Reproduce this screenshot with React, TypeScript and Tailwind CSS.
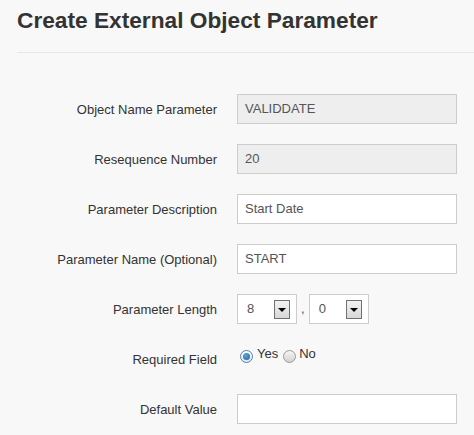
import React from 'react';

const FIELDS_TOP = [
  { label: 'Object Name Parameter', value: 'VALIDDATE', readOnly: true },
  { label: 'Resequence Number', value: '20', readOnly: true },
  { label: 'Parameter Description', value: 'Start Date', readOnly: false },
  { label: 'Parameter Name (Optional)', value: 'START', readOnly: false },
];

function TextBox({ value, readOnly }: { value: string; readOnly?: boolean }) {
  return (
    <div
      className={`ml-[20px] flex h-[30px] w-[220px] items-center border border-[#cccccc] pl-[7px] text-[13px] text-[#555555] ${
        readOnly ? 'bg-[#eeeeee]' : 'bg-white'
      }`}
    >
      {value}
    </div>
  );
}

function Label({ children }: { children: React.ReactNode }) {
  return <div className="w-[200px] text-right text-[13px] leading-[15px] text-[#333333]">{children}</div>;
}

function SelectBox({ value }: { value: string }) {
  return (
    <div className="flex h-[30px] w-[60px] items-center border border-[#cccccc] bg-white pl-[9px] text-[13px] text-[#555555]">
      <span className="flex-1">{value}</span>
      {/* dropdown arrow button */}
      <span className="mr-[6px] flex h-[19px] w-[16px] items-center justify-center border border-[#707070] bg-[linear-gradient(#f2f2f2,#d8d8d8)]">
        <span className="mt-[1px] h-0 w-0 border-t-[4px] border-r-[4px] border-l-[4px] border-t-black border-r-transparent border-l-transparent" />
      </span>
    </div>
  );
}

function Radio({ checked }: { checked?: boolean }) {
  return (
    <span
      className={`flex h-[13px] w-[13px] items-center justify-center rounded-full border ${
        checked
          ? 'border-[#5a7fa0] bg-[linear-gradient(#ffffff,#dfe6ee)]'
          : 'border-[#9a9a9a] bg-[linear-gradient(#f6f6f6,#d2d2d2)]'
      }`}
    >
      {checked && (
        <span className="h-[7px] w-[7px] rounded-full bg-[radial-gradient(circle_at_40%_35%,#5aa8e0,#1d5f9e)]" />
      )}
    </span>
  );
}

export default function App() {
  return (
    <div className="min-h-[435px] bg-[#f8f8f8] pt-[8px] pl-[17px] font-['Liberation_Sans',Arial,sans-serif] text-[#333333]">
      <h1 className="border-b border-[#e6e6e6] pb-[19px] text-[22.7px] leading-[25px] font-bold text-[#333333]">
        Create External Object Parameter
      </h1>

      <div className="mt-[41px] flex flex-col gap-[20px]">
        {FIELDS_TOP.map((f) => (
          <div key={f.label} className="flex h-[30px] items-center">
            <Label>{f.label}</Label>
            <TextBox value={f.value} readOnly={f.readOnly} />
          </div>
        ))}

        {/* Parameter Length */}
        <div className="flex h-[30px] items-center">
          <Label>Parameter Length</Label>
          <div className="ml-[20px] flex items-center text-[13px] text-[#555555]">
            <SelectBox value="8" />
            <span className="mx-[4px]">,</span>
            <SelectBox value="0" />
          </div>
        </div>

        {/* Required Field */}
        <div className="flex h-[30px] items-center">
          <Label>Required Field</Label>
          <div className="mt-[2px] ml-[20px] flex items-start self-start text-[13px] leading-[15px] text-[#333333]">
            <span className="mt-[4px] ml-[3px]">
              <Radio checked />
            </span>
            <span className="ml-[4px]">Yes</span>
            <span className="mt-[4px] ml-[5px]">
              <Radio />
            </span>
            <span className="ml-[3px]">No</span>
          </div>
        </div>

        {/* Default Value */}
        <div className="flex h-[30px] items-center">
          <Label>Default Value</Label>
          <TextBox value="" />
        </div>
      </div>
    </div>
  );
}
